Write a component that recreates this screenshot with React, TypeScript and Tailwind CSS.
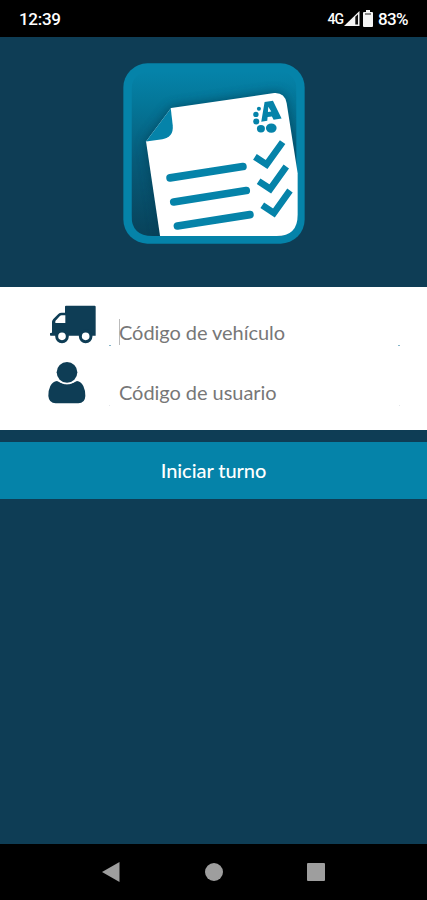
import { useState, type ReactNode } from "react";

function StatusBar() {
  return (
    <header className="flex h-[37px] shrink-0 items-center justify-between bg-black pl-[19px] pr-[19px] font-['Roboto',sans-serif] text-white">
      <span className="pt-0.5 text-[17px] font-medium leading-none tracking-[-0.3px]">12:39</span>
      <div className="flex items-center">
        <span className="mr-px pt-px text-[14px] font-medium leading-none tracking-[-1px]">4G</span>
        <svg className="h-[15px] w-4" viewBox="0 0 16 15" aria-hidden="true">
          <path d="M0 15 15.5 0v15Z" fill="#f4f4f4" />
          <path d="M11.3 5.8 14 3.2v10.3h-2.7Z" fill="#111" />
        </svg>
        <svg className="ml-[3px] mr-[5px] h-[17px] w-[10px]" viewBox="0 0 10 17" aria-hidden="true">
          <path d="M3 0h4v2h2q1 0 1 1v13q0 1-1 1H1q-1 0-1-1V3q0-1 1-1h2Z" fill="#f4f4f4" />
          <path d="M2 3h6v2H2Z" fill="#888" />
        </svg>
        <span className="pt-0.5 text-[17px] font-medium leading-none tracking-[-0.6px]">83%</span>
      </div>
    </header>
  );
}

function AppLogo() {
  return (
    <svg className="h-[181px] w-[182px]" viewBox="25 25 545 542" aria-hidden="true">
      <defs>
        <linearGradient id="panel" x1="0" y1="0" x2="0" y2="1">
          <stop offset="0" stopColor="#0583a9" />
          <stop offset="0.2" stopColor="#047698" />
          <stop offset="0.55" stopColor="#075a78" />
          <stop offset="1" stopColor="#08425a" />
        </linearGradient>
        <filter id="shade" x="-20%" y="-20%" width="140%" height="140%">
          <feGaussianBlur stdDeviation="17" />
        </filter>
        <clipPath id="inner">
          <path d="M50 25H545V480Q545 543 482 543H113Q50 543 50 480Z" />
        </clipPath>
      </defs>
      <rect x="26" y="26" width="543" height="540" rx="72" fill="#0583a9" />
      <g clipPath="url(#inner)">
        <path d="M50 110Q50 50 110 50H485Q545 50 545 110V543H50Z" fill="url(#panel)" />
        <path
          d="M169 160 478 115Q509 113 515 145L548 355V543H136L94 260Z"
          fill="#073d54"
          opacity="0.75"
          filter="url(#shade)"
        />
      </g>
      <path
        d="M169 160 478 115Q509 113 515 145L548 355V480Q548 543 485 543H136L94 260Z"
        fill="#fff"
      />
      <path d="M168 161 94 260 143 253Q177 247 174 212Z" fill="#0583a9" />
      <g stroke="#0583a9" strokeWidth="23" strokeLinecap="round" fill="none">
        <path d="M166 369 384 335" />
        <path d="M177 441 394 407" />
        <path d="M188 513 405 479" />
      </g>
      <g stroke="#0583a9" strokeWidth="20" fill="none">
        <path d="M420 306 455 329 503 262" />
        <path d="M431 379 466 402 514 335" />
        <path d="M442 451 477 474 525 407" />
      </g>
      {/* brand mark */}
      <g fill="#0583a9">
        <path
          fillRule="evenodd"
          d="m449 142 25-4 26 53-24 4-5-10-13 2-1 11-18 3Zm11 14-1 16 10-2Z"
        />
        <circle cx="432" cy="162" r="6" />
        <circle cx="423" cy="179" r="8" />
        <circle cx="424" cy="200" r="9" />
        <ellipse cx="438" cy="222" rx="12" ry="11" />
        <ellipse cx="469" cy="220" rx="16" ry="14" />
      </g>
    </svg>
  );
}

function TruckIcon() {
  return (
    <svg className="h-[39px] w-[46px]" viewBox="59 75 138 117" aria-hidden="true">
      <path
        d="M107 77H193Q196 77 196 80V167H61Q59 167 59 164V160Q60 158 65 158V126Q65 121 69 117L84 102Q88 98 94 98H104V80Q104 77 107 77ZM94 106Q91 106 88 109L75 123V129H105V106Z"
        fill="#0e3d55"
        fillRule="evenodd"
      />
      <circle cx="95" cy="169" r="16" fill="#fff" stroke="#0e3d55" strokeWidth="9" />
      <circle cx="166" cy="169" r="16" fill="#fff" stroke="#0e3d55" strokeWidth="9" />
    </svg>
  );
}

function UserIcon() {
  return (
    <svg className="h-[42px] w-[38px]" viewBox="53 244 114 126" aria-hidden="true">
      <path
        d="M80 301Q110 321 140 301Q152 302 159 316Q166 331 165 346Q164 368 144 368H76Q56 368 54 346Q53 331 60 316Q67 302 80 301Z"
        fill="#0e3d55"
      />
      <circle cx="110" cy="276" r="35" fill="#fff" />
      <circle cx="110" cy="275" r="31" fill="#0e3d55" />
    </svg>
  );
}

function Field({
  icon,
  label,
  value,
  onChange,
  focused = false,
}: {
  icon: ReactNode;
  label: string;
  value: string;
  onChange: (value: string) => void;
  focused?: boolean;
}) {
  const dot = focused ? "h-px w-0.5 bg-[#85b5c9]" : "h-px w-px bg-gray-200";
  return (
    <div className="flex h-[60px]">
      <div className="w-[61px] shrink-0">{icon}</div>
      <div className="flex flex-1 items-end justify-between pb-4">
        <span className={dot} />
        <div className="flex h-full flex-1 items-start pl-2 pt-[15px]">
          {focused && <span className="mt-0.5 h-[26px] w-px bg-[#bbb]" />}
          <input
            aria-label={label}
            placeholder={label}
            value={value}
            onChange={(event) => onChange(event.target.value)}
            className={
              focused
                ? "-ml-px h-[29px] w-full text-[20px] tracking-[-0.05px] text-[#555] outline-none placeholder:text-[#777]"
                : "ml-px h-[29px] w-full text-[20px] tracking-[-0.05px] text-[#555] outline-none placeholder:text-[#777]"
            }
          />
        </div>
        <span className={dot} />
      </div>
    </div>
  );
}

function NavigationBar() {
  return (
    <nav className="flex h-14 shrink-0 items-center justify-between bg-black pl-[102px] pr-[102px]">
      <button type="button" aria-label="Atrás">
        <svg className="h-5 w-[18px]" viewBox="0 0 18 20">
          <path d="M0 10 17.5 0v20Z" fill="#9e9e9e" />
        </svg>
      </button>
      <button type="button" aria-label="Inicio" className="size-[18px] rounded-full bg-[#9e9e9e]" />
      <button
        type="button"
        aria-label="Recientes"
        className="size-[18px] rounded-[1px] bg-[#9e9e9e]"
      />
    </nav>
  );
}

export default function App() {
  const [vehicle, setVehicle] = useState("");
  const [user, setUser] = useState("");

  return (
    <div className="flex h-screen flex-col overflow-hidden bg-[#0e3d55] font-['Lato',sans-serif]">
      <StatusBar />
      <main className="flex flex-1 flex-col">
        {/* Logo */}
        <div className="flex h-[250px] justify-center pl-px pt-[26px]">
          <AppLogo />
        </div>

        {/* Shift form */}
        <form onSubmit={(event) => event.preventDefault()}>
          <div className="h-[143px] bg-white pl-12 pr-[27px] pt-[15px]">
            <Field
              icon={
                <div className="pl-0.5 pt-[3px]">
                  <TruckIcon />
                </div>
              }
              label="Código de vehículo"
              value={vehicle}
              onChange={setVehicle}
              focused
            />
            <Field icon={<UserIcon />} label="Código de usuario" value={user} onChange={setUser} />
          </div>
          <button
            type="submit"
            className="mt-3 h-[57px] w-full bg-[#0583a9] pb-0.5 text-[20px] font-medium tracking-[-0.05px] text-white"
          >
            Iniciar turno
          </button>
        </form>
      </main>
      <NavigationBar />
    </div>
  );
}
